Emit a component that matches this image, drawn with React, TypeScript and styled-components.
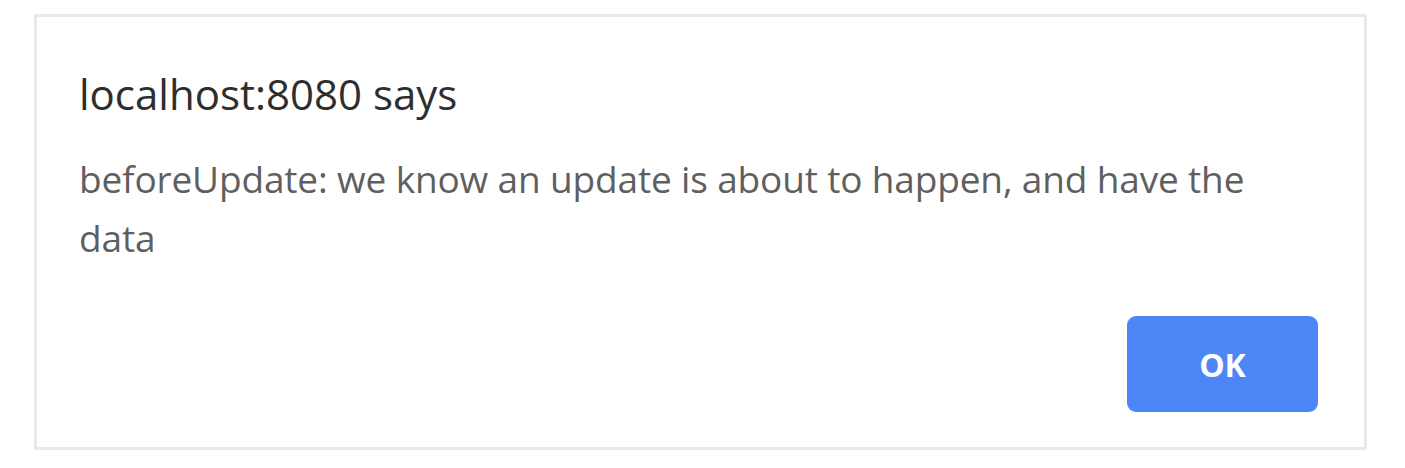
import React from "react";
import styled, { createGlobalStyle } from "styled-components";

const Global = createGlobalStyle`
  html, body { margin: 0; padding: 0; background: #ffffff; }
  body { font-family: "Open Sans", "Noto Sans", sans-serif; }
`;

const Page = styled.div`
  padding: 14px 38px 18px 34px;
`;

const Dialog = styled.div`
  box-sizing: border-box;
  width: 1333px;
  height: 436px;
  background: #ffffff;
  border: 3px solid #e9e9e9;
  display: flex;
  flex-direction: column;
  padding: 52px 46px 35px 42px;
`;

const Title = styled.div`
  font-size: 42px;
  line-height: 50px;
  color: #2e2e2e;
`;

const Message = styled.div`
  margin-top: 30px;
  font-size: 37px;
  line-height: 59px;
  letter-spacing: -0.15px;
  color: #5f5f5f;
  width: 1185px;
`;

const Footer = styled.div`
  margin-top: auto;
  display: flex;
  justify-content: flex-end;
`;

const Button = styled.button`
  width: 191px;
  height: 96px;
  border: none;
  border-radius: 9px;
  background: #4d86f7;
  color: #ffffff;
  font-family: "Open Sans", "Noto Sans", sans-serif;
  font-weight: 700;
  font-size: 32px;
  cursor: pointer;
`;

export default function App() {
  return (
    <>
      <Global />
      <Page>
        <Dialog>
          <Title>localhost:8080 says</Title>
          <Message>
            beforeUpdate: we know an update is about to happen, and have the data
          </Message>
          <Footer>
            <Button>OK</Button>
          </Footer>
        </Dialog>
      </Page>
    </>
  );
}
